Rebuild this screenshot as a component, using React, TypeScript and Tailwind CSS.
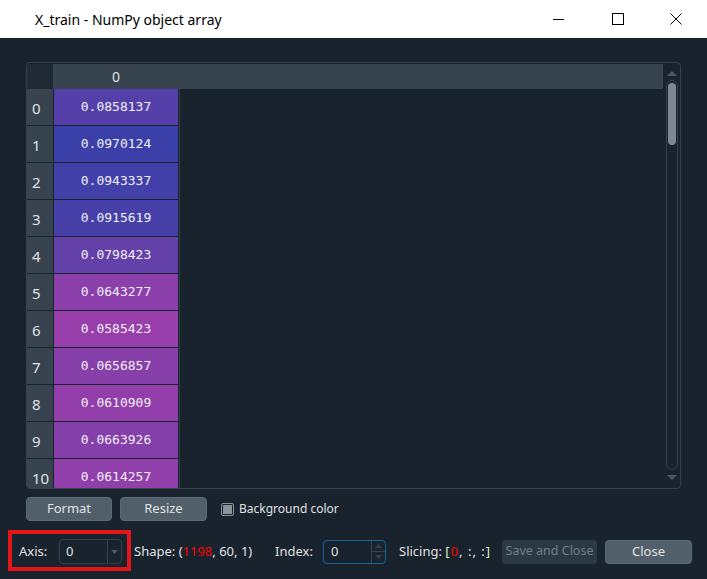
const values = [
  '0.0858137',
  '0.0970124',
  '0.0943337',
  '0.0915619',
  '0.0798423',
  '0.0643277',
  '0.0585423',
  '0.0656857',
  '0.0610909',
  '0.0663926',
  '0.0614257',
]

const lo = 0.0585423
const hi = 0.0970124

// spyder-ish colormap: low values magenta, high values blue
function cellColor(v: number) {
  const t = (v - lo) / (hi - lo)
  const r = Math.round(152 - t * 94)
  const g = Math.round(63 + t * 1)
  const b = Math.round(171 - t * 3)
  return `rgb(${r}, ${g}, ${b})`
}

function TitleBar() {
  return (
    <div className="h-[38px] bg-white flex items-center shrink-0">
      <span className="ml-[35px] text-[14px] text-black font-['Noto_Sans',sans-serif]">X_train - NumPy object array</span>
      <div className="ml-auto mr-[25px] flex items-center">
        <svg width="12" height="12" viewBox="0 0 12 12">
          <line x1="0" y1="6.5" x2="11" y2="6.5" stroke="#000" strokeWidth="1" />
        </svg>
        <svg width="12" height="12" viewBox="0 0 12 12" className="ml-[47px]">
          <rect x="0.5" y="0.5" width="11" height="11" fill="none" stroke="#000" strokeWidth="1" />
        </svg>
        <svg width="12" height="12" viewBox="0 0 12 12" className="ml-[46px]">
          <path d="M0.5 0.5 L11.5 11.5 M11.5 0.5 L0.5 11.5" stroke="#000" strokeWidth="1" />
        </svg>
      </div>
    </div>
  )
}

function Table() {
  return (
    <div className="mx-[26px] mt-[24px] h-[427px] border border-[#32414b] rounded-[4px] flex overflow-hidden">
      <div className="flex-1 flex flex-col pt-px overflow-hidden">
        <div className="flex h-[25px] shrink-0">
          <div className="w-[26px] bg-[#1f2a34]" />
          <div className="flex-1 bg-[#37444f] flex">
            <div className="w-[126px] flex items-center justify-center text-[14px] text-[#e0e1e3] font-['Noto_Sans',sans-serif]">0</div>
          </div>
        </div>
        {values.map((v, i) => (
          <div key={i} className="flex h-[37px] shrink-0">
            <div className="w-[26px] h-[36px] bg-[#37444f] flex items-center pl-[5px] pt-[3px] text-[15px] text-[#e0e1e3] font-['Noto_Sans',sans-serif]">{i}</div>
            <div
              className="ml-px w-[124px] h-[36px] flex items-center justify-center text-[13px] text-[#f0f0f6] font-['DejaVu_Sans_Mono',monospace]"
              style={{ backgroundColor: cellColor(parseFloat(v)) }}
            >
              {v}
            </div>
            <div className="ml-px w-px bg-[#32414b]" />
          </div>
        ))}
      </div>
      <div className="w-[17px] flex flex-col items-center pt-[8px]">
        <svg width="10" height="5" viewBox="0 0 10 5">
          <path d="M0 5 L5 0 L10 5 Z" fill="#4a5866" />
        </svg>
        <div className="mt-[4px] w-[12px] h-[390px] border border-[#32414b] rounded-[6px] flex justify-center pt-[2px]">
          <div className="w-[8px] h-[62px] bg-[#7e878f] rounded-[4px]" />
        </div>
        <svg width="10" height="5" viewBox="0 0 10 5" className="mt-[5px]">
          <path d="M0 0 L10 0 L5 5 Z" fill="#4a5866" />
        </svg>
      </div>
    </div>
  )
}

export default function App() {
  return (
    <div className="w-[707px] h-[579px] bg-[#19232d] flex flex-col overflow-hidden font-['Noto_Sans',sans-serif]">
      <TitleBar />
      <Table />

      <div className="mt-[8px] ml-[26px] flex items-center h-[24px]">
        <div className="w-[86px] h-[24px] bg-[#505f69] border border-[#5a6973] rounded-[4px] flex items-center justify-center text-[13px] text-[#e0e1e3]">Format</div>
        <div className="ml-[8px] w-[87px] h-[24px] bg-[#505f69] border border-[#5a6973] rounded-[4px] flex items-center justify-center text-[13px] text-[#e0e1e3]">Resize</div>
        <div className="ml-[14px] w-[13px] h-[13px] border border-[#8a939a] rounded-[2px] flex items-center justify-center">
          <div className="w-[9px] h-[9px] bg-[#8a939a]" />
        </div>
        <span className="ml-[5px] text-[12px] text-[#e0e1e3]">Background color</span>
      </div>

      <div className="relative mt-[18px] flex items-center h-[25px] text-[13px] text-[#e0e1e3] whitespace-nowrap">
        <div className="absolute left-[8px] top-[-9px] w-[123px] h-[41px] border-4 border-[#e4161c]" />
        <span className="ml-[19px] w-[40px]">Axis:</span>
        <div className="w-[63px] h-[25px] border border-[#32414b] rounded-[4px] flex items-center">
          <span className="pl-[6px] flex-1">0</span>
          <div className="w-[14px] h-full border-l border-[#32414b] flex items-center justify-center">
            <svg width="7" height="4" viewBox="0 0 7 4">
              <path d="M0 0 L7 0 L3.5 4 Z" fill="#4a5866" />
            </svg>
          </div>
        </div>
        <span className="ml-[12px] w-[141px]">
          Shape: (<span className="text-[#ff0000]">1198</span>, 60, 1)
        </span>
        <span className="w-[48px]">Index:</span>
        <div className="w-[63px] h-[24px] border border-[#1464a0] rounded-[4px] flex items-center">
          <span className="pl-[7px] flex-1">0</span>
          <div className="w-[14px] h-full border-l border-[#32414b] flex flex-col">
            <div className="flex-1 flex items-center justify-center border-b border-[#32414b]">
              <svg width="7" height="4" viewBox="0 0 7 4">
                <path d="M0 4 L3.5 0 L7 4 Z" fill="#32414b" />
              </svg>
            </div>
            <div className="flex-1 flex items-center justify-center">
              <svg width="7" height="4" viewBox="0 0 7 4">
                <path d="M0 0 L7 0 L3.5 4 Z" fill="#32414b" />
              </svg>
            </div>
          </div>
        </div>
        <span className="ml-[13px] w-[103px]">
          Slicing: <span className="tracking-[1px]"><span className="text-[#d4f5c8]">[</span><span className="text-[#ff0000]">0</span>, :, :<span className="text-[#d4f5c8]">]</span></span>
        </span>
        <div className="w-[95px] h-[24px] bg-[#2b3944] rounded-[4px] flex items-center justify-center text-[12.5px] text-[#6f808c]">Save and Close</div>
        <div className="ml-[8px] w-[87px] h-[24px] bg-[#505f69] border border-[#5a6973] rounded-[4px] flex items-center justify-center">Close</div>
      </div>
    </div>
  )
}
